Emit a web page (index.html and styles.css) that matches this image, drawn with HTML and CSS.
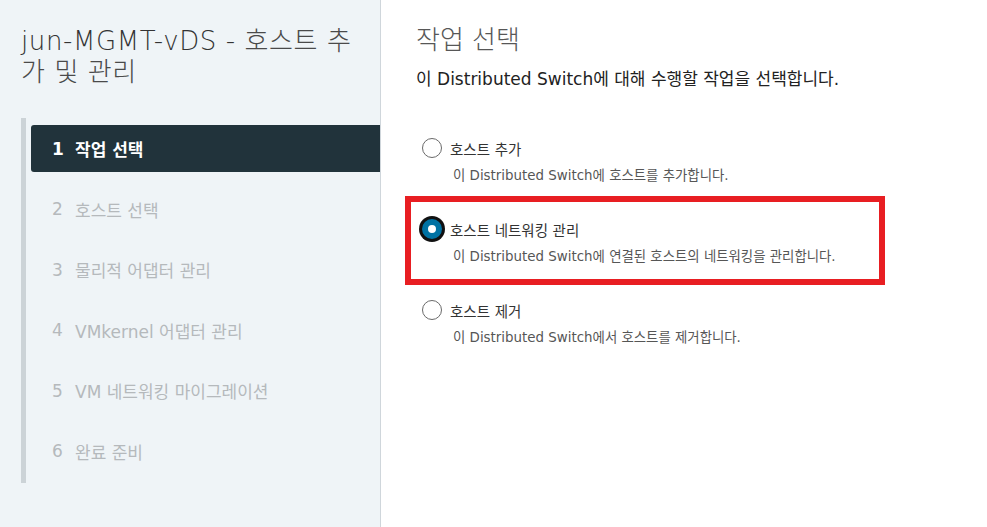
FILE: index.html
```html
<!DOCTYPE html>
<html lang="ko">
<head>
<meta charset="utf-8">
<title>jun-MGMT-vDS - 호스트 추가 및 관리</title>
<link rel="stylesheet" href="styles.css">
</head>
<body>
<div class="wizard">
  <aside class="sidebar">
    <h1 class="wizard-title">jun-MGMT-vDS - <span class="ko">호스트 추</span><br><span class="ko">가 및 관리</span></h1>
    <ol class="steps">
      <li class="step active"><span class="num">1</span><span>작업 선택</span></li>
      <li class="step"><span class="num">2</span><span>호스트 선택</span></li>
      <li class="step"><span class="num">3</span><span>물리적 어댑터 관리</span></li>
      <li class="step"><span class="num">4</span><span>VMkernel 어댑터 관리</span></li>
      <li class="step"><span class="num">5</span><span>VM 네트워킹 마이그레이션</span></li>
      <li class="step"><span class="num">6</span><span>완료 준비</span></li>
    </ol>
  </aside>
  <main class="content">
    <h2 class="page-title">작업 선택</h2>
    <p class="page-desc">이 Distributed Switch에 대해 수행할 작업을 선택합니다.</p>
    <div class="options">
      <div class="option">
        <div class="option-row"><span class="radio"></span><span class="option-label">호스트 추가</span></div>
        <div class="option-desc">이 Distributed Switch에 호스트를 추가합니다.</div>
      </div>
      <div class="option marked">
        <div class="option-row"><span class="radio checked"></span><span class="option-label">호스트 네트워킹 관리</span></div>
        <div class="option-desc">이 Distributed Switch에 연결된 호스트의 네트워킹을 관리합니다.</div>
      </div>
      <div class="option">
        <div class="option-row"><span class="radio"></span><span class="option-label">호스트 제거</span></div>
        <div class="option-desc">이 Distributed Switch에서 호스트를 제거합니다.</div>
      </div>
    </div>
  </main>
</div>
</body>
</html>
```

FILE: styles.css
```css
*, *::before, *::after { box-sizing: border-box; }
html, body { margin: 0; padding: 0; }
body {
  font-family: "DejaVu Sans", "Noto Sans CJK KR", sans-serif;
  background: #ffffff;
  color: #333;
}
.wizard {
  display: flex;
  height: 527px;
}
.sidebar {
  width: 381px;
  flex: none;
  background: #eff4f7;
  border-right: 1px solid #cfd6db;
  padding-top: 26px;
}
.wizard-title {
  margin: 0 0 0 21px;
  font-size: 26px;
  line-height: 31px;
  font-weight: 200;
  letter-spacing: 0.6px;
  color: #333;
}
.wizard-title .ko { color: #4a4a4a; font-weight: 300; }
.steps {
  list-style: none;
  margin: 30px 0 0 21px;
  padding: 7px 0 8px 0;
  border-left: 5px solid #ccd3d7;
  display: flex;
  flex-direction: column;
  gap: 13.5px;
}
.step {
  height: 47px;
  margin-left: 5px;
  padding-left: 21px;
  display: flex;
  align-items: center;
  gap: 13px;
  font-size: 17px;
  color: #b5b9bc;
}
.step .num { width: 10px; }
.step.active {
  background: #21333b;
  color: #fff;
  font-weight: 700;
  border-radius: 3px 0 0 3px;
}
.content {
  flex: 1;
  padding: 24px 0 0 35px;
}
.page-title {
  margin: 0;
  font-size: 26px;
  line-height: 32px;
  font-weight: 300;
  color: #575757;
}
.page-desc {
  margin: 12px 0 0 0;
  font-size: 17px;
  line-height: 22px;
  color: #222;
}
.options {
  margin-top: 48px;
  padding-left: 6px;
  display: flex;
  flex-direction: column;
  gap: 34px;
}
.option { position: relative; }
.option-row {
  display: flex;
  align-items: center;
  gap: 8px;
  height: 20px;
}
.radio {
  width: 20px;
  height: 20px;
  border-radius: 50%;
  border: 1px solid #6a6a6a;
  background: #fff;
  flex: none;
}
.radio.checked {
  border: 6px solid #0072a3;
  background: #fff;
  box-shadow: 0 0 0 3px #111;
}
.option-label {
  font-size: 14.5px;
  color: #333;
}
.option-desc {
  margin: 9px 0 0 31px;
  height: 18px;
  line-height: 18px;
  font-size: 13.4px;
  color: #565656;
}
.option.marked::after {
  content: "";
  position: absolute;
  left: -17px;
  top: -23px;
  width: 480px;
  bottom: -19px;
  border: 6px solid #e81e22;
  pointer-events: none;
}
```
